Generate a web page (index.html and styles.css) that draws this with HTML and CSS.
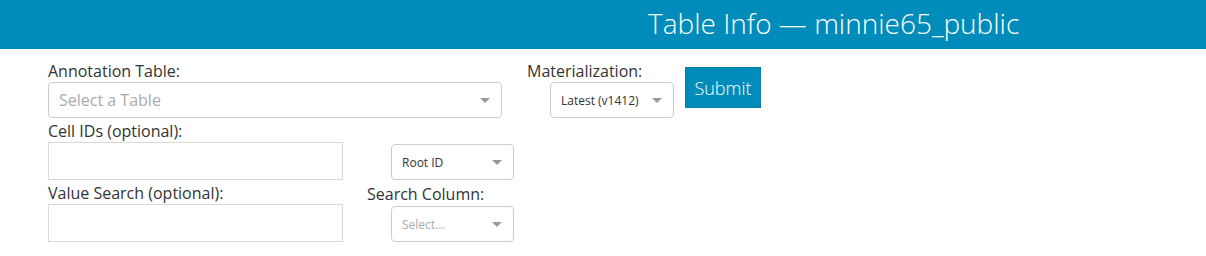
FILE: index.html
```html
<!DOCTYPE html>
<html>
<head>
<meta charset="utf-8">
<title>Table Info</title>
<link rel="stylesheet" href="styles.css">
</head>
<body>
<header class="topbar">
  <h1 class="title">Table Info — minnie65_public</h1>
</header>
<main class="content">
  <div class="row row-one">
    <div class="field field-annotation">
      <label class="label">Annotation Table:</label>
      <div class="select select-wide"><span class="placeholder big">Select a Table</span><span class="arrow"></span></div>
    </div>
    <div class="field field-mat">
      <label class="label">Materialization:</label>
      <div class="select select-mat"><span class="value">Latest (v1412)</span><span class="arrow"></span></div>
    </div>
    <button class="submit" type="button">Submit</button>
  </div>
  <div class="row row-two">
    <div class="field">
      <label class="label">Cell IDs (optional):</label>
      <input class="text-input" type="text">
    </div>
    <div class="select select-small select-root"><span class="value">Root ID</span><span class="arrow"></span></div>
  </div>
  <div class="row row-three">
    <div class="field">
      <label class="label">Value Search (optional):</label>
      <input class="text-input" type="text">
    </div>
    <div class="field field-searchcol">
      <label class="label label-searchcol">Search Column:</label>
      <div class="select select-small select-col"><span class="placeholder">Select...</span><span class="arrow"></span></div>
    </div>
  </div>
</main>
</body>
</html>
```

FILE: styles.css
```css
* { box-sizing: border-box; }
body {
  margin: 0;
  font-family: "Open Sans", "DejaVu Sans", sans-serif;
  color: #333;
  background: #fff;
}
.topbar {
  background: #008cba;
  height: 49px;
  padding-left: 648px;
}
.title {
  margin: 0;
  font-weight: 300;
  font-size: 28px;
  line-height: 46px;
  color: #fff;
  white-space: nowrap;
}
.content {
  padding: 12px 0 0 48px;
}
.row {
  display: flex;
}
.row-one { align-items: flex-start; }
.row-two { align-items: flex-end; margin-top: 3px; }
.row-three { align-items: flex-end; margin-top: 3px; }
.field {
  display: flex;
  flex-direction: column;
}
.label {
  font-size: 16px;
  line-height: 21px;
  color: #333;
}
.select {
  position: relative;
  height: 36px;
  border: 1px solid #ccc;
  border-radius: 4px;
  background: #fff;
  display: flex;
  align-items: center;
  padding-left: 10px;
}
.select-wide { width: 454px; }
.field-mat { margin-left: 25px; }
.select-mat { width: 124px; margin-left: 23px; }
.select-small { width: 123px; }
.select-root { margin-left: 48px; }
.field-searchcol { margin-left: 24px; }
.label-searchcol { margin-bottom: 1px; }
.select-col { margin-left: 24px; }
.placeholder {
  color: #aaa;
  font-size: 12px;
}
.placeholder.big { font-size: 16px; }
.value {
  color: #333;
  font-size: 12px;
}
.arrow {
  position: absolute;
  right: 11px;
  top: 50%;
  margin-top: -2px;
  width: 0;
  height: 0;
  border-left: 5px solid transparent;
  border-right: 5px solid transparent;
  border-top: 5px solid #999;
}
.submit {
  margin-left: 11px;
  margin-top: 6px;
  width: 76px;
  height: 41px;
  background: #008cba;
  color: #fff;
  border: 1px solid #0080aa;
  font-family: "Open Sans", "DejaVu Sans", sans-serif;
  font-size: 18px;
  font-weight: 300;
  padding: 0;
}
.text-input {
  width: 295px;
  height: 38px;
  border: 1px solid #d9d9d9;
  border-radius: 0;
  margin: 0;
  font-family: "Open Sans", sans-serif;
  font-size: 14px;
}
```
